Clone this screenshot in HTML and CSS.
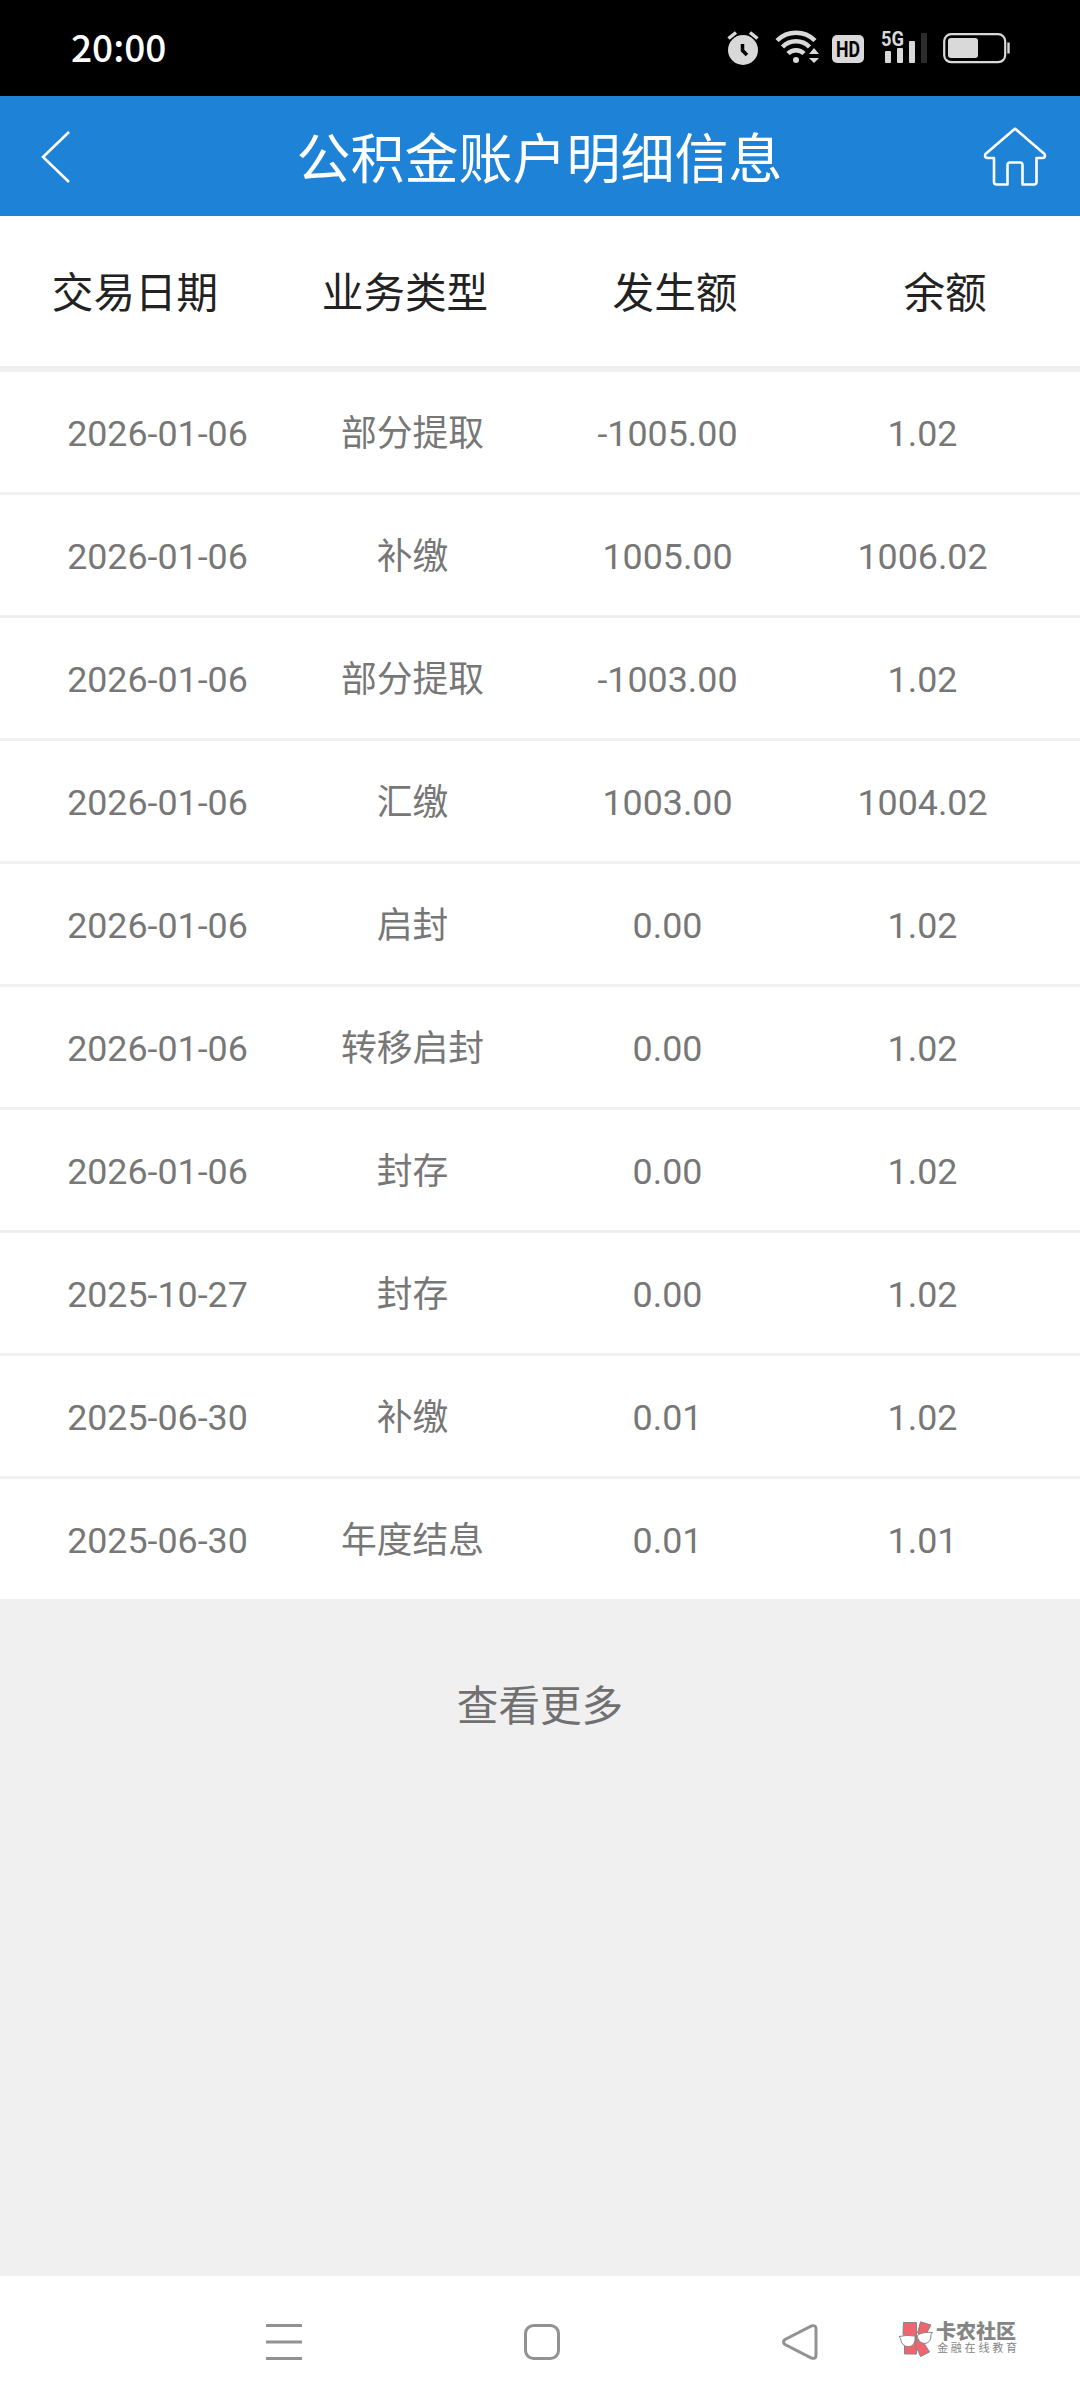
FILE: index.html
```
<!DOCTYPE html>
<html lang="zh-CN">
<head>
    <meta charset="UTF-8">
    <meta name="viewport" content="width=device-width, initial-scale=1.0">
    <title>公积金账户明细信息</title>
    <link rel="stylesheet" href="styles.css">
</head>
<body>
    <div class="status-bar">
        <span class="clock">20:00</span>
        <svg class="status-icons" width="290" height="40" viewBox="0 0 290 40">
            <!-- alarma -->
            <g fill="#d9d9d9" stroke="#d9d9d9">
                <circle cx="20" cy="22" r="15" stroke="none"/>
                <path d="M5.500 10.500L13 4.500M34.500 10.500L27 4.500" stroke-width="3.500" fill="none"/>
                <path d="M19.500 16v6.500l4.500 4.500" stroke="#000" stroke-width="3.500" fill="none"/>
            </g>
            <!-- wifi -->
            <g fill="none" stroke="#d9d9d9" stroke-width="4.500">
                <path d="M54 12.500a27 27 0 0 1 38 0"/>
                <path d="M59.500 19a19 19 0 0 1 27 0"/>
                <path d="M65 25.500a11.500 11.500 0 0 1 16 0"/>
                <circle cx="73" cy="32" r="3" fill="#d9d9d9" stroke="none"/>
                <path d="M86 26h10l-5-6zM86 30h10l-5 5z" fill="#d9d9d9" stroke="none"/>
            </g>
            <!-- HD -->
            <rect x="109" y="7" width="32" height="28" rx="5" fill="#d9d9d9"/>
            <text class="hd" x="125" y="29" textLength="24" lengthAdjust="spacingAndGlyphs">HD</text>
            <!-- señal -->
            <text class="net" x="158" y="17.500" textLength="23" lengthAdjust="spacingAndGlyphs">5G</text>
            <g fill="#d9d9d9">
                <rect x="162" y="23" width="6" height="12" rx="1"/>
                <rect x="174" y="20" width="6" height="15" rx="1"/>
                <rect x="186" y="13" width="6" height="22" rx="1"/>
                <rect x="198" y="5" width="6" height="30" rx="1" fill="#2b2b2b"/>
            </g>
            <!-- batería -->
            <rect x="221.200" y="6.200" width="61" height="28" rx="7" fill="none" stroke="#d9d9d9" stroke-width="2.200"/>
            <rect x="225" y="10" width="30" height="20" rx="3" fill="#d9d9d9"/>
            <path d="M285.500 14.500v11" stroke="#d9d9d9" stroke-width="2.400"/>
        </svg>
    </div>

    <div class="header">
        <svg class="back" width="32" height="54" viewBox="0 0 32 54" fill="none" stroke="#fff" stroke-width="2.600">
            <path d="M29 2L3 27l26 25"/>
        </svg>
        <h1>公积金账户明细信息</h1>
        <svg class="home" width="64" height="60" viewBox="0 0 64 60" fill="none" stroke="#fff" stroke-width="2.600" stroke-linejoin="round">
            <path d="M31 2.500Q32 1.500 33 2.500L61.500 27Q63 31 59 31H53.500V55Q53.500 57.500 51 57.500H39.500V38Q39.500 35.500 37 35.500H27Q24.500 35.500 24.500 38V57.500H13.500Q11 57.500 11 55V31H5Q1 31 2.500 27Z"/>
        </svg>
    </div>

    <div class="table-head">
        <span>交易日期</span>
        <span>业务类型</span>
        <span>发生额</span>
        <span>余额</span>
    </div>

    <div class="list">
        <div class="row"><span>2026-01-06</span><span>部分提取</span><span>-1005.00</span><span>1.02</span></div>
        <div class="row"><span>2026-01-06</span><span>补缴</span><span>1005.00</span><span>1006.02</span></div>
        <div class="row"><span>2026-01-06</span><span>部分提取</span><span>-1003.00</span><span>1.02</span></div>
        <div class="row"><span>2026-01-06</span><span>汇缴</span><span>1003.00</span><span>1004.02</span></div>
        <div class="row"><span>2026-01-06</span><span>启封</span><span>0.00</span><span>1.02</span></div>
        <div class="row"><span>2026-01-06</span><span>转移启封</span><span>0.00</span><span>1.02</span></div>
        <div class="row"><span>2026-01-06</span><span>封存</span><span>0.00</span><span>1.02</span></div>
        <div class="row"><span>2025-10-27</span><span>封存</span><span>0.00</span><span>1.02</span></div>
        <div class="row"><span>2025-06-30</span><span>补缴</span><span>0.01</span><span>1.02</span></div>
        <div class="row"><span>2025-06-30</span><span>年度结息</span><span>0.01</span><span>1.01</span></div>
    </div>

    <div class="more">查看更多</div>

    <div class="nav-bar">
        <svg width="36" height="36" viewBox="0 0 36 36" stroke="#929292" stroke-width="3">
            <path d="M0 1.500h36M0 18h36M0 34.500h36"/>
        </svg>
        <svg width="36" height="36" viewBox="0 0 36 36" fill="none" stroke="#929292" stroke-width="3">
            <rect x="1.500" y="1.500" width="33" height="33" rx="8"/>
        </svg>
        <svg width="36" height="36" viewBox="0 0 36 36" fill="none" stroke="#929292" stroke-width="3">
            <path d="M3 15.500L29.500 2Q34 .5 34 5V31Q34 35.500 29.500 34L3 20.500Q0 18 3 15.500Z"/>
        </svg>
        <div class="watermark">
            <svg width="36" height="37" viewBox="0 0 36 37">
                <g fill="#f0646f" stroke="#858585" stroke-width="1">
                    <path d="M5.500 1.500H18.500V33H6.500V22L5 12Z"/>
                    <path d="M22.500 .8L33 4L27 15L19.500 12Z"/>
                    <path d="M18.500 18L24 19L31.500 31L22.500 35.500L17.500 24Z"/>
                </g>
                <g fill="#fff" stroke="#858585" stroke-width="1">
                    <path d="M1 15.500Q9 13.500 17 15Q18 25 10.500 25.800Q3.500 25.500 2.500 17.500Z"/>
                    <path d="M19 14.500Q25 10.500 34.500 11.500L33 13.500Q33.500 21.500 27 22.500Q20.500 22.500 19 14.500Z"/>
                </g>
            </svg>
            <div class="watermark-text">
                <b>卡农社区</b>
                <span>金融在线教育</span>
            </div>
        </div>
    </div>
</body>
</html>
```
FILE: styles.css
```
:root {
    --primary-color: #1e82d6;
    --background-color: #f0f0f0;
    --text-color: #222;
    --muted-color: #777;
}

* {
    margin: 0;
    padding: 0;
    box-sizing: border-box;
}

body {
    font-family: Roboto, 'Noto Sans CJK SC', sans-serif;
    background-color: var(--background-color);
    color: var(--text-color);
    width: 1080px;
    height: 2408px;
    display: flex;
    flex-direction: column;
    overflow: hidden;
}

svg {
    display: block;
    flex-shrink: 0;
}

.status-bar {
    height: 96px;
    padding: 0 67px 0 71px;
    background-color: #000;
    display: flex;
    justify-content: space-between;
    align-items: center;
}

.clock {
    color: #fff;
    font-family: 'Noto Sans CJK SC', sans-serif;
    font-size: 37px;
    font-weight: 500;
    line-height: 1;
    padding-bottom: 3px;
}

.hd {
    font: bold 22px Roboto, sans-serif;
    text-anchor: middle;
    fill: #000;
}

.net {
    font: bold 20px Roboto, sans-serif;
    fill: #d9d9d9;
}

.header {
    height: 120px;
    padding: 2px 33px 0 40px;
    background-color: var(--primary-color);
    display: grid;
    grid-template-columns: 68px 1fr 64px;
    align-items: center;
}

.header h1 {
    color: #fff;
    font-size: 54px;
    font-weight: 400;
    line-height: 1;
    padding: 8px 12px 0 0;
    text-align: center;
}

.table-head {
    height: 156px;
    padding-bottom: 3px;
    background-color: #fff;
    border-bottom: 6px solid var(--background-color);
    display: grid;
    grid-template-columns: repeat(4, 1fr);
    align-items: center;
    text-align: center;
    font-size: 41.6px;
}

.row {
    height: 123px;
    padding: 4px 30px 0;
    background-color: #fff;
    border-bottom: 3px solid var(--background-color);
    display: grid;
    grid-template-columns: repeat(4, 1fr);
    align-items: center;
    text-align: center;
    font-size: 35.8px;
    line-height: 42px;
    color: var(--muted-color);
}

.more {
    padding-top: 71px;
    text-align: center;
    font-size: 41.6px;
    color: #707070;
}

.nav-bar {
    height: 132px;
    margin-top: auto;
    padding: 0 60px 0 266px;
    background-color: #fff;
    display: flex;
    align-items: center;
    gap: 222px;
}

.watermark {
    display: flex;
    align-items: center;
    gap: 2px;
    margin: 0 0 6px -142px;
}

.watermark-text {
    color: #858585;
    white-space: nowrap;
}

.watermark-text b {
    display: block;
    font-size: 20px;
    font-weight: 900;
    line-height: 20px;
}

.watermark-text span {
    display: block;
    padding-left: 1px;
    font-size: 11px;
    line-height: 14px;
    letter-spacing: 2.8px;
}
```
